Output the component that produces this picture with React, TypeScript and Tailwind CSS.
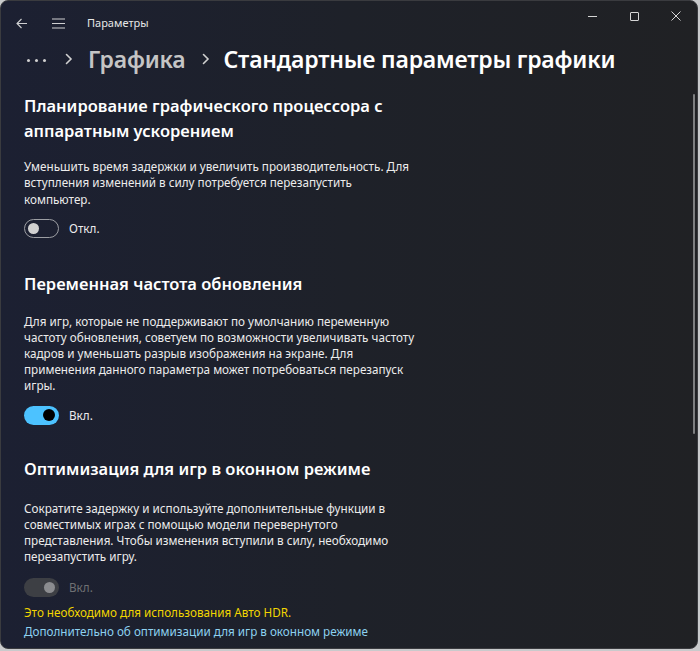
import { useState } from 'react'

type ToggleProps = {
  on: boolean
  disabled?: boolean
  onChange?: () => void
}

const Toggle = ({ on, disabled, onChange }: ToggleProps) => {
  if (disabled) {
    return (
      <div className="flex h-[19px] w-[35px] items-center justify-end rounded-full bg-[#3d3f44] pr-[4px]">
        <div className="h-[11px] w-[11px] rounded-full bg-[#8b8c8f]" />
      </div>
    )
  }
  return (
    <button
      onClick={onChange}
      className={
        on
          ? 'flex h-[19px] w-[35px] items-center justify-end rounded-full bg-[#4cc2ff] pr-[4px]'
          : 'flex h-[19px] w-[35px] items-center justify-start rounded-full border border-[#9c9ea3] bg-transparent pl-[3px]'
      }
    >
      <div
        className={
          on ? 'h-[12px] w-[12px] rounded-full bg-black' : 'h-[11px] w-[11px] rounded-full bg-[#d0d0d0]'
        }
      />
    </button>
  )
}

const Chevron = ({ className }: { className: string }) => (
  <svg width="9" height="12" viewBox="0 0 9 12" className={className}>
    <path d="M2.5 1.5 L7 6 L2.5 10.5" stroke="#d0d0d0" strokeWidth="1.6" fill="none" strokeLinecap="round" />
  </svg>
)

export default function App() {
  const [gpu, setGpu] = useState(false)
  const [vrr, setVrr] = useState(true)

  return (
    <div className="h-[651px] w-[700px] bg-[#c9cacc]" style={{ fontFamily: '"Noto Sans", sans-serif' }}>
      <div className="flex h-[649px] w-[698px] flex-col overflow-hidden rounded-[8px] border border-[#3a3b3f] bg-gradient-to-r from-[#1c2032] via-[#1e2129] to-[#202124] text-white">
        {/* title bar */}
        <div className="flex h-[44px] items-center">
          <div className="flex w-[40px] items-center justify-center pl-[2px]">
            <svg width="12" height="11" viewBox="0 0 12 11">
              <path d="M11 5.5 H1.5 M5.5 1 L1 5.5 L5.5 10" stroke="#cfd0d2" strokeWidth="1.1" fill="none" />
            </svg>
          </div>
          <div className="flex w-[34px] items-center justify-center">
            <svg width="13" height="11" viewBox="0 0 13 11">
              <path d="M0 1 H13 M0 5.5 H13 M0 10 H13" stroke="#cfd0d2" strokeWidth="1.1" />
            </svg>
          </div>
          <span className="ml-[12px] text-[11px] text-[#e6e6e6]">Параметры</span>
          <div className="ml-auto flex h-full items-start">
            <div className="flex h-[30px] w-[42px] items-center justify-center">
              <div className="h-px w-[9px] bg-[#d6d6d6]" />
            </div>
            <div className="flex h-[30px] w-[42px] items-center justify-center">
              <div className="h-[9px] w-[9px] rounded-[1px] border border-[#d6d6d6]" />
            </div>
            <div className="flex h-[30px] w-[42px] items-center justify-center">
              <svg width="10" height="10" viewBox="0 0 10 10">
                <path d="M0.5 0.5 L9.5 9.5 M9.5 0.5 L0.5 9.5" stroke="#d6d6d6" strokeWidth="1" />
              </svg>
            </div>
          </div>
        </div>

        {/* breadcrumb */}
        <div className="flex h-[28px] items-center pl-[26px]">
          <div className="flex items-center gap-[5px] pt-[2px]">
            <div className="h-[3px] w-[3px] rounded-full bg-[#d0d0d0]" />
            <div className="h-[3px] w-[3px] rounded-full bg-[#d0d0d0]" />
            <div className="h-[3px] w-[3px] rounded-full bg-[#d0d0d0]" />
          </div>
          <Chevron className="ml-[18px] mr-[15px]" />
          <span className="text-[23px] font-semibold tracking-[-0.2px] text-[#c5c5c5]">Графика</span>
          <Chevron className="ml-[15px] mr-[14px]" />
          <span className="text-[23px] font-semibold tracking-[-0.2px] text-white">Стандартные параметры графики</span>
        </div>

        <div className="flex flex-1">
          <div className="w-[417px] pl-[23px] pt-[20px] text-[11.7px]">
            <h2 className="text-[16.5px] font-semibold leading-[25px]">
              Планирование графического процессора с аппаратным ускорением
            </h2>
            <p className="mt-[15px] leading-[16.3px] text-[#ececec]">
              Уменьшить время задержки и увеличить производительность. Для вступления изменений в силу потребуется
              перезапустить компьютер.
            </p>
            <div className="mt-[12px] flex items-center gap-[10px]">
              <Toggle on={gpu} onChange={() => setGpu(!gpu)} />
              <span className="text-[#ececec]">{gpu ? 'Вкл.' : 'Откл.'}</span>
            </div>

            <h2 className="mt-[33px] text-[16.5px] font-semibold leading-[26px]">Переменная частота обновления</h2>
            <p className="mt-[16px] leading-[16px] text-[#ececec]">
              Для игр, которые не поддерживают по умолчанию переменную частоту обновления, советуем по возможности
              увеличивать частоту кадров и уменьшать разрыв изображения на экране. Для применения данного параметра
              может потребоваться перезапуск игры.
            </p>
            <div className="mt-[13px] flex items-center gap-[10px]">
              <Toggle on={vrr} onChange={() => setVrr(!vrr)} />
              <span className="text-[#ececec]">{vrr ? 'Вкл.' : 'Откл.'}</span>
            </div>

            <h2 className="mt-[31px] text-[16.5px] font-semibold leading-[26px]">Оптимизация для игр в оконном режиме</h2>
            <p className="mt-[18px] pr-[10px] leading-[16px] text-[#ececec]">
              Сократите задержку и используйте дополнительные функции в совместимых играх с помощью модели
              перевернутого представления. Чтобы изменения вступили в силу, необходимо перезапустить игру.
            </p>
            <div className="mt-[14px] flex items-center gap-[10px]">
              <Toggle on disabled />
              <span className="text-[#6f7073]">Вкл.</span>
            </div>
            <p className="mt-[7px] leading-[16px] text-[#f2d600]">Это необходимо для использования Авто HDR.</p>
            <a className="mt-[3px] block whitespace-nowrap leading-[16px] text-[#8dd1f0]">
              Дополнительно об оптимизации для игр в оконном режиме
            </a>
          </div>
          <div className="ml-auto mr-[2px] mt-[21px] h-[340px] w-[2px] rounded-full bg-[#7d7e80]" />
        </div>
      </div>
    </div>
  )
}
